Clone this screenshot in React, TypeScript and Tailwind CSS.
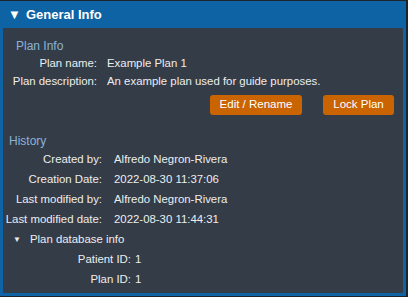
import type { ReactNode } from 'react';

const font = { fontFamily: '"Liberation Sans", Arial, sans-serif' };

function Row({ label, value, labelW, gap, h = 'h-[20px]' }: { label: string; value: ReactNode; labelW: string; gap: string; h?: string }) {
  return (
    <div className={`flex ${h} items-center ${gap}`}>
      <span className={`${labelW} shrink-0 whitespace-nowrap text-right`}>{label}</span>
      <span className="whitespace-nowrap">{value}</span>
    </div>
  );
}

export default function App() {
  return (
    <div className="h-[297px] w-[408px] bg-[#1f242a] pt-px" style={font}>
      <div className="flex h-[295px] w-[406px] flex-col border-x-[3px] border-b-[3px] border-[#0d63a3] bg-[#343c47]">
        {/* Header */}
        <div className="-mx-[3px] flex h-[27px] shrink-0 items-center gap-[5px] bg-[#0d63a3] pl-[8px] text-white">
          <span className="text-[13px] leading-none">▼</span>
          <span className="text-[13px] font-bold">General Info</span>
        </div>

        <div className="text-[11.4px] text-[#eceef0]">
          {/* Plan Info */}
          <div className="pt-[9px]">
            <div className="flex h-[18px] items-center pl-[13px] text-[12px] text-[#8cb3d6]">Plan Info</div>
            <Row label="Plan name:" value="Example Plan 1" labelW="w-[94px]" gap="gap-[10px]" h="h-[18px]" />
            <Row label="Plan description:" value="An example plan used for guide purposes." labelW="w-[94px]" gap="gap-[10px]" h="h-[18px]" />
            <div className="mt-[4px] flex justify-end gap-[21px] pr-[9px]">
              <button className="h-[20px] w-[92px] rounded-[3px] bg-[#c96400] text-[11.5px] text-white">Edit / Rename</button>
              <button className="h-[20px] w-[71px] rounded-[3px] bg-[#c96400] text-[11.5px] text-white">Lock Plan</button>
            </div>
          </div>

          {/* History */}
          <div className="pt-[17px]">
            <div className="flex h-[18px] items-center pl-[6px] text-[12px] text-[#8cb3d6]">History</div>
            <Row label="Created by:" value="Alfredo Negron-Rivera" labelW="w-[99px]" gap="gap-[12px]" />
            <Row label="Creation Date:" value="2022-08-30 11:37:06" labelW="w-[99px]" gap="gap-[12px]" />
            <Row label="Last modified by:" value="Alfredo Negron-Rivera" labelW="w-[99px]" gap="gap-[12px]" />
            <Row label="Last modified date:" value="2022-08-30 11:44:31" labelW="w-[99px]" gap="gap-[12px]" />
            <div className="flex h-[20px] items-center gap-[9px] pl-[10px]">
              <span className="text-[8px] leading-none">▼</span>
              <span>Plan database info</span>
            </div>
            <Row label="Patient ID:" value="1" labelW="w-[128px]" gap="gap-[4px]" />
            <Row label="Plan ID:" value="1" labelW="w-[128px]" gap="gap-[4px]" />
          </div>
        </div>
      </div>
    </div>
  );
}
